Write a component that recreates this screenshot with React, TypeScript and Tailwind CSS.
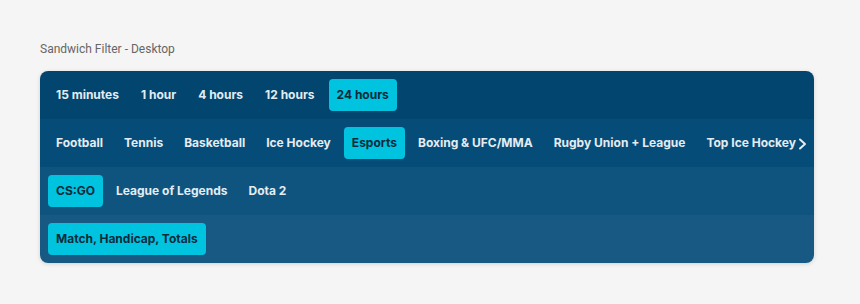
const periods = ["15 minutes", "1 hour", "4 hours", "12 hours", "24 hours"];
const sports = [
  "Football",
  "Tennis",
  "Basketball",
  "Ice Hockey",
  "Esports",
  "Boxing & UFC/MMA",
  "Rugby Union + League",
  "Top Ice Hockey",
];
const games = ["CS:GO", "League of Legends", "Dota 2"];
const markets = ["Match, Handicap, Totals"];

function Row({
  items,
  active,
  bg,
  gap = "gap-[5px]",
  arrow,
}: {
  items: string[];
  active: string;
  bg: string;
  gap?: string;
  arrow?: boolean;
}) {
  return (
    <div className={`relative flex h-12 items-center overflow-hidden px-2 ${bg}`}>
      <div className={`flex items-center whitespace-nowrap ${gap}`}>
        {items.map((item) => (
          <button
            key={item}
            className={
              item === active
                ? "h-8 shrink-0 rounded bg-[#00c3e0] px-2 text-xs font-bold text-[#0a2a3c]"
                : "h-8 shrink-0 rounded px-2 text-xs font-bold text-[#e4ecf1]"
            }
          >
            {item}
          </button>
        ))}
      </div>
      {arrow && (
        <svg
          width="9"
          height="12"
          viewBox="0 0 9 12"
          fill="none"
          className="absolute right-[7px] top-[19px]"
        >
          <path d="M2 1.5 L7 6 L2 10.5" stroke="#e4ecf1" strokeWidth="2" strokeLinecap="round" strokeLinejoin="round" />
        </svg>
      )}
    </div>
  );
}

export default function App() {
  return (
    <div
      className="min-h-screen bg-[#f5f5f5] px-10 pt-[41px]"
      style={{ fontFamily: "Inter, 'Noto Sans', sans-serif" }}
    >
      <p className="text-xs text-[#666666]" style={{ fontFamily: "Roboto, sans-serif" }}>
        Sandwich Filter - Desktop
      </p>
      <div className="mt-[14px] w-[774px] overflow-hidden rounded-lg shadow-[0_1px_4px_rgba(0,0,0,0.15)]">
        <Row items={periods} active="24 hours" bg="bg-[#02456f]" gap="gap-[6px]" />
        <Row items={sports} active="Esports" bg="bg-[#064c79]" arrow />
        <Row items={games} active="CS:GO" bg="bg-[#0e547f]" />
        <Row items={markets} active="Match, Handicap, Totals" bg="bg-[#175983]" />
      </div>
    </div>
  );
}
